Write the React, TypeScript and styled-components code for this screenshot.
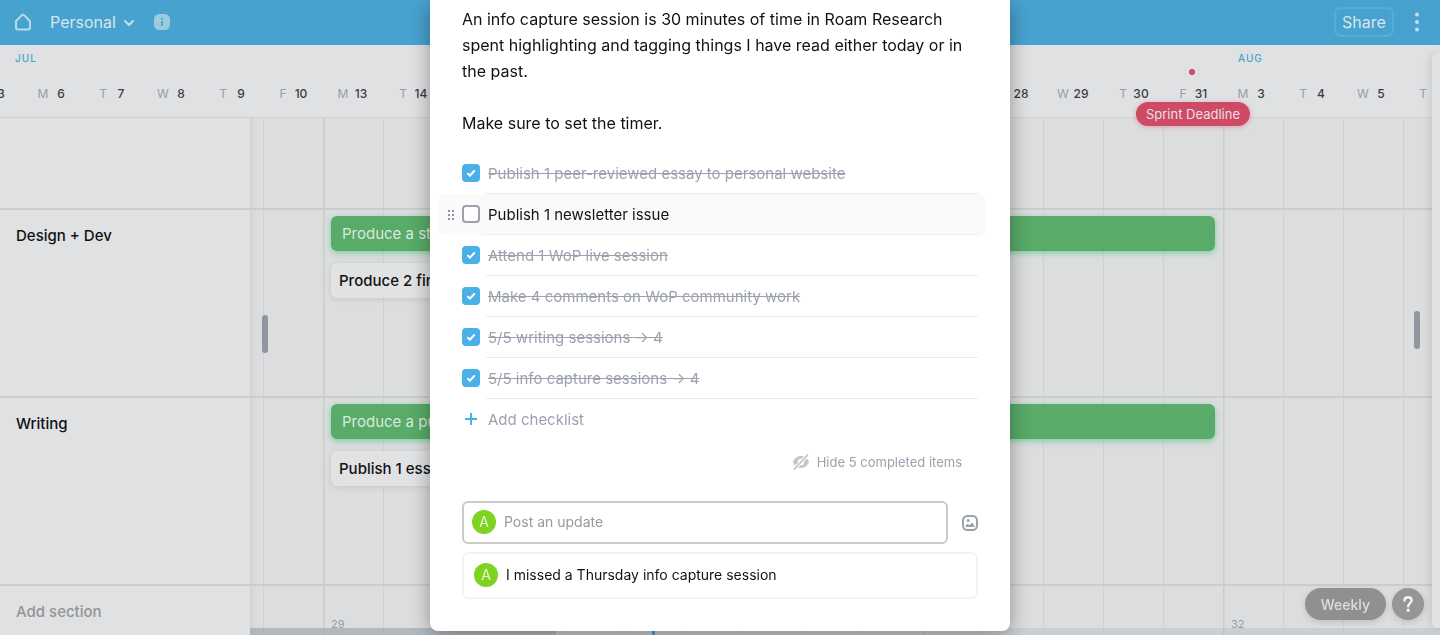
import React, { useState } from "react";
import styled, { createGlobalStyle } from "styled-components";

const GlobalStyle = createGlobalStyle`
  *, *::before, *::after { box-sizing: border-box; }
  body {
    margin: 0;
    background: #e0e1e3;
    color: #111214;
    font-family: Inter, "Liberation Sans", sans-serif;
    font-size: 15px;
  }
  button, input { font: inherit; color: inherit; }
  button { padding: 0; border: 0; background: none; cursor: pointer; }
  h2, p, ul { margin: 0; padding: 0; }
`;

const DAY = 60;
const FIRST_DAY_SHIFT = 37;

const Page = styled.div`
  position: relative;
  display: flex;
  flex-direction: column;
  min-height: 100vh;
  overflow: hidden;
`;

/* Top bar */

const TopBar = styled.header`
  display: flex;
  align-items: center;
  height: 45px;
  padding: 0 18px 2px 14px;
  background: #48a2cf;
  color: #d9e5ec;
  font-size: 16px;
`;

const IconButton = styled.button`
  display: flex;
  flex: none;
`;

const BoardButton = styled.button`
  display: flex;
  align-items: center;
  gap: 7px;
  margin: 0 19px 0 18px;
`;

const ShareButton = styled.button`
  width: 60px;
  height: 30px;
  margin: 0 18px 0 auto;
  border: 2px solid #59abd4;
  border-radius: 7px;
`;

/* Dates */

const Dates = styled.div`
  position: relative;
  z-index: 1;
  height: 73px;
  border-bottom: 1px solid #cfd0d2;
`;

const Months = styled.div`
  display: flex;
  height: 26px;
`;

const Month = styled.span<{ $days: number }>`
  flex: none;
  width: ${(p) => p.$days * DAY}px;
  padding-left: 15px;
  color: #48a2cf;
  font-size: 10px;
  font-weight: 500;
  letter-spacing: 1px;
  line-height: 26px;

  &:first-child { width: ${(p) => p.$days * DAY - FIRST_DAY_SHIFT}px; }
`;

const Days = styled.div`
  display: flex;
  margin-left: -${FIRST_DAY_SHIFT}px;
`;

const Day = styled.div`
  position: relative;
  display: flex;
  flex: none;
  justify-content: center;
  width: ${DAY}px;
  line-height: 46px;
  font-size: 12px;
  text-align: center;
`;

const Weekday = styled.span`
  width: 16px;
  color: #989ea8;
`;

const DayNumber = styled.span`
  width: 20px;
  color: #3b3d42;
  font-weight: 500;
`;

const DeadlineDot = styled.span`
  position: absolute;
  top: -2px;
  left: 26px;
  width: 6px;
  height: 6px;
  border-radius: 50%;
  background: #cd4b65;
`;

const DeadlineTag = styled.span`
  position: absolute;
  top: 31px;
  left: 50%;
  transform: translateX(-50%);
  padding: 0 10px;
  border-radius: 12px;
  background: #cd4b65;
  box-shadow: 0 1px 5px rgba(205, 75, 101, 0.4);
  color: #ecdfe3;
  font-size: 13px;
  line-height: 24px;
  white-space: nowrap;
`;

/* Board */

const Board = styled.main`
  position: relative;
  display: flex;
  flex: 1;
  flex-direction: column;
  background:
    linear-gradient(90deg, #d2d3d5, rgba(210, 211, 213, 0)) 250px 0 / 7px 100% no-repeat,
    linear-gradient(#e0e1e3, #e0e1e3) 0 0 / 250px 100% no-repeat,
    linear-gradient(90deg, #cbccce 1px, #d2d3d5 1px 2px, transparent 2px) 323px 0 / 300px 100%,
    linear-gradient(90deg, #d0d1d3 1px, transparent 1px) 263px 0 / 60px 100%,
    #dcdddf;
`;

const Section = styled.section<{ $height?: number }>`
  display: grid;
  grid-template-columns: 250px minmax(0, 1fr);
  flex: ${(p) => (p.$height ? "none" : "1")};
  min-height: ${(p) => p.$height ?? 50}px;

  & + & { border-top: 2px solid #cbccce; }
`;

const SectionTitle = styled.h2`
  padding: 14px 16px 0;
  font-size: 15px;
  font-weight: 500;
  line-height: 24px;
`;

const AddSection = styled.button`
  align-self: start;
  padding: 14px 16px 0;
  color: #939496;
  font-weight: 500;
  line-height: 24px;
  text-align: left;
`;

const Lane = styled.div`
  display: flex;
  flex-direction: column;
  gap: 12px;
  padding: 6px 0 0 81px;
  overflow: hidden;
`;

const Bar = styled.div<{ $days: number; $goal?: boolean }>`
  width: ${(p) => p.$days * DAY - 16}px;
  padding: 0 ${(p) => (p.$goal ? 11 : 8)}px;
  border-radius: 6px;
  background: ${(p) => (p.$goal ? "#58ab68" : "#e1e2e4")};
  box-shadow: ${(p) =>
    p.$goal ? "0 2px 6px rgba(50, 190, 105, 0.55)" : "0 1px 6px rgba(0, 0, 0, 0.1)"};
  color: ${(p) => (p.$goal ? "#dbe8dd" : "#111214")};
  font-weight: ${(p) => (p.$goal ? 400 : 500)};
  line-height: 35px;
  white-space: nowrap;
`;

const Weeks = styled.div`
  display: flex;
  align-items: flex-end;
  padding: 0 0 5px 73px;
  color: #969ca5;
  font-size: 11px;
  line-height: 12px;
  overflow: hidden;
`;

const Week = styled.span`
  flex: none;
  width: ${DAY * 5}px;
  padding-left: 8px;
`;

const Overview = styled.div`
  position: absolute;
  right: 0;
  bottom: 0;
  left: 250px;
  height: 7px;
  background: rgba(170, 180, 187, 0.35);
`;

const OverviewRange = styled.div`
  position: absolute;
  inset: 0 auto 0 0;
  width: 306px;
  background: rgba(140, 152, 162, 0.4);
`;

const OverviewToday = styled.div`
  position: absolute;
  inset: 0 auto 0 402px;
  width: 3px;
  background: #48a2cf;
`;

const PanHandle = styled.div<{ $side: "left" | "right" }>`
  position: absolute;
  top: ${(p) => (p.$side === "left" ? 197 : 193)}px;
  ${(p) => (p.$side === "left" ? "left: 262px" : "right: 20px")};
  width: 6px;
  height: 38px;
  border-radius: 3px;
  background: #8f969e;
`;

const Drawer = styled.aside`
  position: absolute;
  z-index: 2;
  top: 53px;
  right: 0;
  bottom: 7px;
  width: 8px;
  border-radius: 6px 0 0 6px;
  background: #e1e2e4;
  box-shadow: -1px 0 10px rgba(0, 0, 0, 0.14);
`;

const Floating = styled.div`
  position: fixed;
  z-index: 3;
  right: 16px;
  bottom: 15px;
  display: flex;
  gap: 6px;
`;

const Pill = styled.button`
  display: flex;
  align-items: center;
  justify-content: center;
  height: 32px;
  padding: 0 16px;
  border-radius: 16px;
  background: #8f9092;
  box-shadow: 0 2px 6px rgba(0, 0, 0, 0.14);
  color: #dcdddf;
  font-size: 14px;
  font-weight: 500;
`;

const HelpButton = styled(Pill)`
  width: 32px;
  padding: 0;
  background: #969696;
`;

/* Card dialog */

const Overlay = styled.div`
  position: absolute;
  z-index: 4;
  inset: 0;
  display: flex;
  align-items: flex-start;
  justify-content: center;
`;

const Dialog = styled.div`
  width: 580px;
  max-width: 100%;
  padding: 6px 32px 32px;
  border-radius: 0 0 8px 8px;
  background: #fff;
  box-shadow: 0 4px 20px rgba(0, 0, 0, 0.36);
`;

const Description = styled.p`
  font-size: 16px;
  line-height: 26px;
  white-space: pre-line;
`;

const Checklist = styled.ul`
  margin-top: 17px;
  list-style: none;
`;

const Item = styled.li<{ $active?: boolean }>`
  position: relative;
  display: grid;
  grid-template-columns: 16px minmax(0, 1fr);
  margin: 0 -8px 0 -24px;
  padding: 0 8px;
  border-radius: 6px;
  background: ${(p) => (p.$active ? "#fafafa" : "transparent")};
`;

const DragDots = styled.svg`
  align-self: center;
  color: #8f939a;
`;

const ItemLabel = styled.label<{ $done: boolean }>`
  display: flex;
  align-items: center;
  gap: 8px;
  height: 41px;
  padding-bottom: 1px;
  background: linear-gradient(#ececee, #ececee) 24px 100% / 100% 1px no-repeat;
  color: ${(p) => (p.$done ? "#9ba1ad" : "#111214")};

  span { text-decoration: ${(p) => (p.$done ? "line-through" : "none")}; }
`;

const CheckBox = styled.span`
  display: grid;
  flex: none;
  width: 18px;
  height: 18px;

  > * { grid-area: 1 / 1; }
  svg { pointer-events: none; }
`;

const CheckInput = styled.input`
  width: 18px;
  height: 18px;
  margin: 0;
  appearance: none;
  border: 2px solid #9ba1ad;
  border-radius: 4px;
  background: #fff;

  &:checked { border-color: #4ab1e8; background: #4ab1e8; }
`;

const AddChecklist = styled.button`
  display: flex;
  align-items: center;
  gap: 8px;
  height: 40px;
  color: #9ba1ad;
`;

const HideRow = styled.div`
  display: flex;
  justify-content: flex-end;
  padding: 10px 16px 27px 0;
`;

const HideButton = styled.button`
  display: flex;
  align-items: center;
  gap: 8px;
  height: 25px;
  color: #9ba1ad;
  font-size: 13px;
`;

const Composer = styled.div`
  display: flex;
  align-items: center;
  gap: 14px;
  color: #9ba1ad;
`;

const UpdateField = styled.label`
  display: flex;
  flex: 1;
  align-items: center;
  gap: 8px;
  height: 43px;
  padding: 0 8px 2px;
  border: 2px solid #cacaca;
  border-radius: 6px;
`;

const UpdateInput = styled.input`
  flex: 1;
  min-width: 0;
  padding: 0;
  border: 0;
  outline: 0;
  background: none;
  font-size: 14px;

  &::placeholder { color: #999; opacity: 1; }
`;

const Update = styled.div`
  display: flex;
  align-items: center;
  gap: 8px;
  height: 47px;
  margin-top: 8px;
  padding: 0 10px 2px;
  border: 2px solid #f3f3f3;
  border-radius: 6px;
  font-size: 14px;
`;

const Avatar = styled.span`
  flex: none;
  width: 24px;
  border-radius: 50%;
  background: #7ed321;
  color: #e6f8d0;
  font-size: 14px;
  line-height: 24px;
  text-align: center;
`;

const HomeIcon = () => (
  <svg width="18" height="18" viewBox="0 0 18 18" fill="none" stroke="#b9dbea" strokeWidth="2" strokeLinejoin="round">
    <path d="M2 8.2 7.6 2.4Q9 1.1 10.4 2.4L16 8.2V14.6Q16 16.5 14.1 16.5H3.9Q2 16.5 2 14.6Z" />
  </svg>
);

const ChevronIcon = () => (
  <svg width="12" height="12" viewBox="0 0 12 12" fill="none" stroke="#c4deea" strokeWidth="2" strokeLinecap="round" strokeLinejoin="round">
    <path d="M2 5l4 4 4-4" />
  </svg>
);

const InfoIcon = () => (
  <svg width="16" height="16" viewBox="0 0 16 16">
    <rect width="16" height="16" rx="5.5" fill="#9ccadf" />
    <circle cx="8" cy="5" r="1" fill="#48a2cf" />
    <path d="M8 7v5" stroke="#48a2cf" strokeWidth="1.8" />
  </svg>
);

const MoreIcon = () => (
  <svg width="10" height="20" viewBox="0 0 10 20" fill="#c4deea">
    <circle cx="5" cy="2.5" r="2" />
    <circle cx="5" cy="10" r="2" />
    <circle cx="5" cy="17.5" r="2" />
  </svg>
);

const PlusIcon = () => (
  <svg width="18" height="18" viewBox="0 0 18 18" stroke="#4ab1e8" strokeWidth="2">
    <path d="M9 3v12M3 9h12" />
  </svg>
);

const CheckIcon = () => (
  <svg width="18" height="18" viewBox="0 0 18 18" fill="none" stroke="#fff" strokeWidth="2" strokeLinecap="round" strokeLinejoin="round">
    <path d="M6 9.700 8 11.700 12.200 7" />
  </svg>
);

const HiddenEyeIcon = () => (
  <svg width="16" height="16" viewBox="0 0 16 16" fill="none">
    <path
      fill="#c3c6cd"
      fillRule="evenodd"
      d="M8 2C4 2 1.2 4.6 0 8c1.2 3.4 4 6 8 6s6.800-2.600 8-6C14.800 4.600 12 2 8 2Zm0 2.800a3.200 3.200 0 1 1 0 6.400 3.200 3.200 0 0 1 0-6.400Z"
    />
    <path d="M1 15.600 15 .4" stroke="#fff" strokeWidth="3.600" />
    <path d="M1.500 15 14.500 1" stroke="#c3c6cd" strokeWidth="1.800" strokeLinecap="round" />
  </svg>
);

const ImageIcon = () => (
  <svg width="16" height="16" viewBox="0 0 16 16" fill="none">
    <rect x="1" y="1" width="14" height="14" rx="4.500" stroke="#9ba1ad" strokeWidth="2" />
    <circle cx="6.200" cy="5.600" r="1.500" fill="#9ba1ad" />
    <path d="M3.600 12V10.600L5.600 8.800 7.400 10.200 10 7.400 12.400 10.400V12Z" fill="#9ba1ad" />
  </svg>
);

const HelpIcon = () => (
  <svg width="16" height="18" viewBox="0 0 16 18" fill="none">
    <path d="M4.500 5.600C4.500 3.500 6 2.200 8 2.200S11.600 3.500 11.600 5.400C11.600 8 8.200 8.200 8.200 11.200" stroke="#f4f4f4" strokeWidth="2.400" strokeLinecap="round" />
    <circle cx="8.200" cy="15.200" r="1.600" fill="#f4f4f4" />
  </svg>
);

const days: [string, number][] = [
  ["F", 3],
  ["M", 6], ["T", 7], ["W", 8], ["T", 9], ["F", 10],
  ["M", 13], ["T", 14], ["W", 15], ["T", 16], ["F", 17],
  ["M", 20], ["T", 21], ["W", 22], ["T", 23], ["F", 24],
  ["M", 27], ["T", 28], ["W", 29], ["T", 30], ["F", 31],
  ["M", 3], ["T", 4], ["W", 5], ["T", 6],
];

const initialItems = [
  { text: "Publish 1 peer-reviewed essay to personal website", done: true },
  { text: "Publish 1 newsletter issue", done: false },
  { text: "Attend 1 WoP live session", done: true },
  { text: "Make 4 comments on WoP community work", done: true },
  { text: "5/5 writing sessions → 4", done: true },
  { text: "5/5 info capture sessions → 4", done: true },
];

const description = `An info capture session is 30 minutes of time in Roam Research spent highlighting and tagging things I have read either today or in the past.

Make sure to set the timer.`;

export default function App() {
  const [items, setItems] = useState(initialItems);
  const toggle = (index: number) =>
    setItems(items.map((item, i) => (i === index ? { ...item, done: !item.done } : item)));

  return (
    <Page>
      <GlobalStyle />
      <TopBar>
        <IconButton aria-label="Home"><HomeIcon /></IconButton>
        <BoardButton>Personal <ChevronIcon /></BoardButton>
        <IconButton aria-label="Info"><InfoIcon /></IconButton>
        <ShareButton>Share</ShareButton>
        <IconButton aria-label="More"><MoreIcon /></IconButton>
      </TopBar>

      <Dates>
        <Months>
          <Month $days={21}>JUL</Month>
          <Month $days={4}>AUG</Month>
        </Months>
        <Days>
          {days.map(([weekday, number], i) => (
            <Day key={i}>
              <Weekday>{weekday}</Weekday>
              <DayNumber>{number}</DayNumber>
              {number === 31 && (
                <>
                  <DeadlineDot />
                  <DeadlineTag>Sprint Deadline</DeadlineTag>
                </>
              )}
            </Day>
          ))}
        </Days>
      </Dates>

      <Board>
        <Section $height={90} />
        <Section $height={188}>
          <SectionTitle>Design + Dev</SectionTitle>
          <Lane>
            <Bar $days={15} $goal>Produce a strong</Bar>
            <Bar $days={5}>Produce 2 final</Bar>
          </Lane>
        </Section>
        <Section $height={188}>
          <SectionTitle>Writing</SectionTitle>
          <Lane>
            <Bar $days={15} $goal>Produce a public</Bar>
            <Bar $days={5}>Publish 1 essay</Bar>
          </Lane>
        </Section>
        <Section>
          <AddSection>Add section</AddSection>
          <Weeks>
            {[29, 30, 31, 32].map((week) => <Week key={week}>{week}</Week>)}
          </Weeks>
        </Section>
        <PanHandle $side="left" />
        <PanHandle $side="right" />
        <Overview>
          <OverviewRange />
          <OverviewToday />
        </Overview>
      </Board>

      <Drawer />
      <Floating>
        <Pill>Weekly</Pill>
        <HelpButton aria-label="Help"><HelpIcon /></HelpButton>
      </Floating>

      <Overlay>
        <Dialog role="dialog" aria-label="Card details">
          <Description>{description}</Description>
          <Checklist>
            {items.map((item, i) => (
              <Item key={item.text} $active={i === 1}>
                {i === 1 ? (
                  <DragDots width="10" height="12" viewBox="0 0 10 12" fill="currentColor">
                    {[1, 5, 9].map((y) => (
                      <React.Fragment key={y}>
                        <rect x="2" y={y} width="2" height="2" />
                        <rect x="6" y={y} width="2" height="2" />
                      </React.Fragment>
                    ))}
                  </DragDots>
                ) : <i />}
                <ItemLabel $done={item.done}>
                  <CheckBox>
                    <CheckInput type="checkbox" checked={item.done} onChange={() => toggle(i)} />
                    {item.done && <CheckIcon />}
                  </CheckBox>
                  <span>{item.text}</span>
                </ItemLabel>
              </Item>
            ))}
          </Checklist>
          <AddChecklist><PlusIcon /> Add checklist</AddChecklist>
          <HideRow>
            <HideButton><HiddenEyeIcon /> Hide 5 completed items</HideButton>
          </HideRow>
          <Composer>
            <UpdateField>
              <Avatar>A</Avatar>
              <UpdateInput placeholder="Post an update" aria-label="Post an update" />
            </UpdateField>
            <IconButton aria-label="Attach image"><ImageIcon /></IconButton>
          </Composer>
          <Update>
            <Avatar>A</Avatar>
            I missed a Thursday info capture session
          </Update>
        </Dialog>
      </Overlay>
    </Page>
  );
}
